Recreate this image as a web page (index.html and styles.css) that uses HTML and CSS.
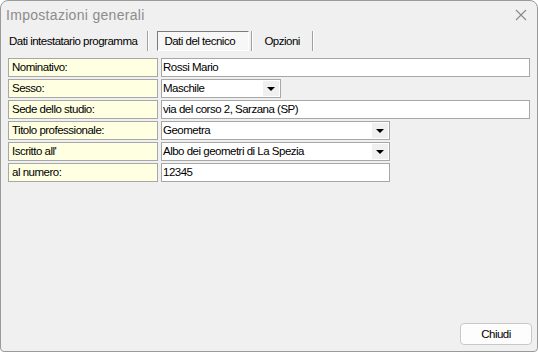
FILE: index.html
```html
<!DOCTYPE html>
<html lang="it">
<head>
  <meta charset="UTF-8" />
  <title>Impostazioni generali</title>
  <link rel="stylesheet" href="styles.css">
</head>
<body>
  <div class="window">
    <div class="titlebar">
      <span class="title">Impostazioni generali</span>
      <svg class="close" width="12" height="12" viewBox="0 0 12 12">
        <path d="M1 1 L11 11 M11 1 L1 11" stroke="#8a8a8a" stroke-width="1.1" fill="none" />
      </svg>
    </div>

    <div class="tabs">
      <span class="tab first">Dati intestatario programma</span>
      <span class="sep"></span>
      <span class="tab active">Dati del tecnico</span>
      <span class="sep"></span>
      <span class="tab last">Opzioni</span>
      <span class="sep"></span>
    </div>

    <div class="form">
      <div class="row">
        <div class="lbl">Nominativo:</div>
        <div class="field wide">Rossi Mario</div>
      </div>
      <div class="row">
        <div class="lbl">Sesso:</div>
        <div class="field combo small">Maschile<span class="arrow"></span></div>
      </div>
      <div class="row">
        <div class="lbl">Sede dello studio:</div>
        <div class="field wide">via del corso 2, Sarzana (SP)</div>
      </div>
      <div class="row">
        <div class="lbl">Titolo professionale:</div>
        <div class="field combo mid">Geometra<span class="arrow"></span></div>
      </div>
      <div class="row">
        <div class="lbl">Iscritto all'</div>
        <div class="field combo mid">Albo dei geometri di La Spezia<span class="arrow"></span></div>
      </div>
      <div class="row">
        <div class="lbl">al numero:</div>
        <div class="field mid">12345</div>
      </div>
    </div>

    <div class="footer">
      <button class="btn">Chiudi</button>
    </div>
  </div>
</body>
</html>
```

FILE: styles.css
```css
body {
  margin: 0;
  font-family: "Liberation Sans", Arial, sans-serif;
  font-size: 11.5px;
  letter-spacing: -0.5px;
  color: #000;
  background: #fff;
}
.window {
  box-sizing: border-box;
  width: 538px;
  height: 352px;
  border: 1px solid #9a9a9a;
  border-radius: 8px 8px 4px 4px;
  background: #f0f0f0;
  display: flex;
  flex-direction: column;
  overflow: hidden;
}
.titlebar {
  height: 27px;
  display: flex;
  align-items: center;
  justify-content: space-between;
  padding: 0 10px 0 5px;
}
.title {
  color: #8c8c8c;
  font-size: 14px;
  letter-spacing: 0.3px;
}
.tabs {
  height: 22px;
  display: flex;
  align-items: center;
  padding-left: 8px;
  margin-top: 2px;
}
.tab {
  line-height: 18px;
}
.tab.first {
  margin-right: 10px;
}
.tab.active {
  box-sizing: border-box;
  width: 92px;
  border: 1px solid;
  border-color: #7a7a7a #ffffff #ffffff #7a7a7a;
  background: #f7f7f7;
  padding-left: 6px;
  height: 20px;
  margin: 0 2px 0 8px;
}
.tab.last {
  margin: 0 12px 0 11px;
}
.sep {
  width: 1px;
  height: 20px;
  border-left: 1px solid #a0a0a0;
  background: #fff;
}
.form {
  padding: 6px 0 0 7px;
  display: flex;
  flex-direction: column;
  gap: 2px;
}
.row {
  display: flex;
  gap: 3px;
  height: 19px;
}
.lbl, .field {
  box-sizing: border-box;
  height: 19px;
  line-height: 17px;
  border: 1px solid #a7a7a7;
  white-space: nowrap;
}
.lbl {
  width: 150px;
  background: #ffffe1;
  padding-left: 3px;
}
.field {
  background: #fff;
  padding-left: 1px;
  position: relative;
}
.wide { width: 369px; }
.mid { width: 229px; }
.small { width: 120px; }
.arrow {
  position: absolute;
  right: 1px;
  top: 1px;
  width: 16px;
  height: 15px;
  background: #f0f0f0;
}
.arrow::after {
  content: "";
  position: absolute;
  left: 4px;
  top: 6px;
  border-left: 4px solid transparent;
  border-right: 4px solid transparent;
  border-top: 4px solid #000;
}
.footer {
  margin-top: auto;
  display: flex;
  justify-content: flex-end;
  padding: 0 5px 6px 0;
}
.btn {
  width: 72px;
  height: 22px;
  background: #fdfdfd;
  border: 1px solid #c8c8c8;
  border-radius: 4px;
  font-family: inherit;
  font-size: 11.5px;
  letter-spacing: -0.5px;
  color: #000;
}
```
